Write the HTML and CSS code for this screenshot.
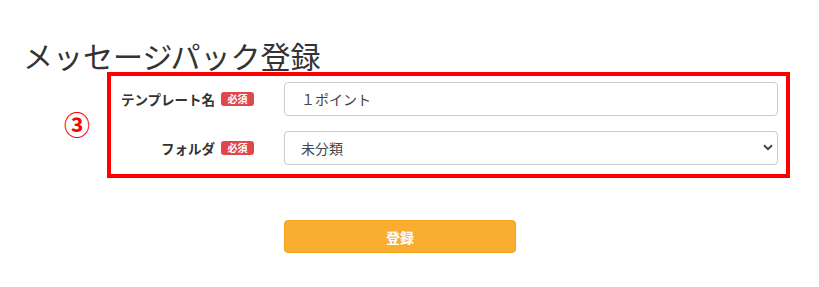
FILE: index.html
```html
<!DOCTYPE html>
<html lang="ja">
<head>
<meta charset="utf-8">
<link rel="stylesheet" href="styles.css">
</head>
<body>
<div class="page">
  <h1 class="title">メッセージパック登録</h1>
  <div class="annot-wrap">
    <span class="annot">③</span>
    <div class="redbox">
      <div class="row">
        <div class="label"><span class="label-text">テンプレート名</span><span class="badge">必須</span></div>
        <input class="field" type="text" value="１ポイント">
      </div>
      <div class="row">
        <div class="label"><span class="label-text">フォルダ</span><span class="badge">必須</span></div>
        <div class="select-wrap">
          <select class="field select"><option>未分類</option></select>
          <svg class="chev" width="10" height="7" viewBox="0 0 10 7"><path d="M1 1.2 L5 5.2 L9 1.2" fill="none" stroke="#444" stroke-width="2"/></svg>
        </div>
      </div>
    </div>
  </div>
  <div class="actions">
    <button class="submit">登録</button>
  </div>
</div>
</body>
</html>
```
FILE: styles.css
```css
* { box-sizing: border-box; }
html, body { margin: 0; padding: 0; background: #fff; }
body { font-family: "Noto Sans CJK JP", "Noto Sans", sans-serif; color: #333; }
.page { padding: 0; width: 819px; }
.title {
  margin: 0;
  padding: 37px 0 0 23px;
  font-size: 30px;
  font-weight: 400;
  line-height: 37px;
  color: #333;
  height: 72px;
}
.annot-wrap { position: relative; margin-left: 107px; width: 683px; }
.annot {
  position: absolute;
  left: -43px;
  top: 37px;
  font-size: 26px;
  font-weight: 700;
  line-height: 30px;
  color: #f00;
}
.redbox {
  border: 4px solid #f00;
  padding: 6px 8px 9px 0;
  display: flex;
  flex-direction: column;
  gap: 15px;
}
.row { display: flex; align-items: center; gap: 30px; }
.label {
  width: 143px;
  display: flex;
  justify-content: flex-end;
  align-items: center;
  gap: 6px;
}
.label-text { font-size: 13.5px; font-weight: 700; color: #333; line-height: 20px; white-space: nowrap; }
.badge {
  background: #e0474c;
  color: #fff;
  font-size: 10px;
  font-weight: 700;
  line-height: 14px;
  height: 14px;
  width: 33px;
  text-align: center;
  border-radius: 3px;
}
.field {
  width: 494px;
  height: 34px;
  border: 1px solid #ccc;
  border-radius: 4px;
  padding: 0 16px;
  font-family: "Noto Sans CJK JP", "Noto Sans", sans-serif;
  font-size: 14px;
  color: #444;
  background: #fff;
  outline: none;
}
.select-wrap { position: relative; width: 494px; height: 34px; }
.select { appearance: none; -webkit-appearance: none; display: block; }
.chev { position: absolute; right: 5px; top: 13px; pointer-events: none; }
.actions { padding: 42px 0 0 284px; }
.submit {
  width: 232px;
  height: 33px;
  background: #f8ad30;
  border: 1px solid #f2a217;
  border-radius: 4px;
  color: #fff;
  font-family: "Noto Sans CJK JP", "Noto Sans", sans-serif;
  font-size: 14px;
  font-weight: 700;
  padding: 0;
}
```
